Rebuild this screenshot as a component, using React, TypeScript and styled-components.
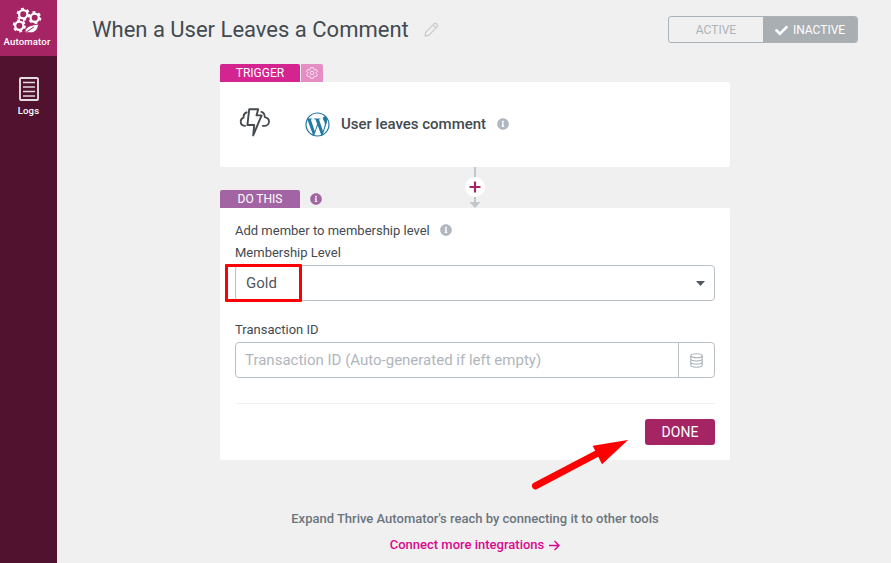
import React from "react";
import styled, { createGlobalStyle } from "styled-components";
import { FaCheck, FaInfoCircle, FaWordpressSimple } from "react-icons/fa";

const GlobalStyle = createGlobalStyle`
  * { box-sizing: border-box; }
  html, body { margin: 0; padding: 0; }
  body { background: #f0f0f0; font-family: Roboto, sans-serif; color: #434a50; overflow: hidden; }
  svg { display: block; flex: none; }
`;

const Shell = styled.div`
  display: flex;
  width: 891px;
  height: 563px;
  background: #f0f0f0;
`;

const Sidebar = styled.nav`
  flex: none;
  width: 57px;
  background: #50122f;
`;

const NavItem = styled.a<{ $brand?: boolean }>`
  display: flex;
  flex-direction: column;
  align-items: center;
  height: ${(p) => (p.$brand ? 56 : 68)}px;
  padding-top: ${(p) => (p.$brand ? 6 : 21)}px;
  background: ${(p) => (p.$brand ? "#a42464" : "transparent")};
  padding-right: ${(p) => (p.$brand ? 3 : 0)}px;
  color: #fff;
  font-size: 9.6px;
  font-weight: 500;
  line-height: 12px;
  gap: ${(p) => (p.$brand ? 2 : 4)}px;
  letter-spacing: 0.15px;
`;

const Main = styled.main`
  flex: 1;
  min-width: 0;
`;

const Header = styled.header`
  display: flex;
  align-items: center;
  height: 64px;
  padding: 0 33px 5px 35px;
`;

const Title = styled.h1`
  margin: 0 15px 0 0;
  font-size: 22px;
  font-weight: 400;
  line-height: 28px;
  white-space: nowrap;
`;

const Toggle = styled.div`
  display: flex;
  margin-left: auto;
  width: 190px;
  height: 27px;
  border: 1px solid #abb3ba;
  border-radius: 3px;
  overflow: hidden;
`;

const ToggleOption = styled.button<{ $on?: boolean }>`
  display: flex;
  align-items: center;
  justify-content: center;
  gap: 5px;
  width: 94px;
  padding: 1px 0 0;
  border: 0;
  font: 400 12px/25px Roboto, sans-serif;
  color: ${(p) => (p.$on ? "#fff" : "#abb3ba")};
  background: ${(p) => (p.$on ? "#a9aeb2" : "transparent")};
`;

const Flow = styled.div`
  width: 510px;
  margin-left: 163px;
`;

const StepHead = styled.div`
  display: flex;
  align-items: center;
  height: 18px;
`;

const StepTag = styled.span<{ $color: string }>`
  width: 80px;
  height: 18px;
  border-radius: 2px 2px 0 0;
  background: ${(p) => p.$color};
  color: #fff;
  font-size: 12px;
  line-height: 18px;
  text-align: center;
`;

const GearTag = styled.button`
  display: flex;
  align-items: center;
  justify-content: center;
  width: 22px;
  height: 18px;
  margin-left: 1px;
  padding: 0;
  border: 0;
  border-radius: 0 2px 0 0;
  background: #e48ec4;
`;

const TagHint = styled.span`
  margin-left: 10px;
  color: #a364a3;
`;

const TriggerCard = styled.section`
  display: flex;
  align-items: center;
  height: 85px;
  padding: 0 19px 2px;
  border-radius: 0 2px 2px 2px;
  background: #fff;
`;

const TriggerName = styled.span`
  margin: 0 11px 0 11px;
  font-size: 15px;
  font-weight: 500;
`;

const WordPressMark = styled(FaWordpressSimple)`
  margin: 1px 0 0 34px;
  color: #2578a0;
`;

const Hint = styled(FaInfoCircle)`
  color: #b0b7be;
`;

const Link = styled.div`
  position: relative;
  height: 23px;
`;

const Connector = styled.svg`
  position: absolute;
  left: 244px;
  top: 0;
`;

const ActionCard = styled.section`
  height: 252px;
  padding: 11px 15px 0;
  border-radius: 0 2px 2px 2px;
  background: #fff;
`;

const Label = styled.div`
  display: flex;
  align-items: center;
  gap: 10px;
  height: 22px;
  font-size: 13px;
`;

const Field = styled.div`
  position: relative;
  display: flex;
  align-items: center;
  width: 480px;
  height: 36px;
  margin-top: 2px;
  padding-left: 10px;
  border: 1px solid #b9c0c6;
  border-radius: 4px;
  font-size: 15px;
  color: #50575e;
`;

const SelectField = styled(Field)`
  justify-content: space-between;
  margin-bottom: 17px;
  padding-right: 9px;
`;

const Placeholder = styled.span`
  flex: 1;
  margin-left: -1px;
  color: #b0b6bc;
`;

const DataButton = styled.button`
  display: flex;
  align-items: center;
  justify-content: center;
  width: 36px;
  height: 34px;
  padding: 0;
  border: 0;
  border-left: 1px solid #b9c0c6;
  background: none;
`;

const Highlight = styled.div`
  position: absolute;
  left: -11px;
  top: -2px;
  width: 77px;
  height: 38px;
  border: 3px solid #fb0007;
  border-radius: 1px;
`;

const Actions = styled.div`
  display: flex;
  justify-content: flex-end;
  margin-top: 25px;
  padding-top: 15px;
  border-top: 1px solid #f1f1f1;
`;

const Done = styled.button`
  width: 70px;
  height: 26px;
  padding: 0;
  border: 0;
  border-radius: 3px;
  background: #a42464;
  color: #fff;
  font: 400 14px/26px Roboto, sans-serif;
`;

const Footer = styled.footer`
  display: flex;
  flex-direction: column;
  align-items: center;
  gap: 10px;
  padding-top: 51px;
  font-size: 13px;
  font-weight: 500;
  line-height: 16px;
  color: #6c757d;
  white-space: nowrap;
`;

const MoreLink = styled.a`
  display: flex;
  align-items: center;
  gap: 5px;
  color: #d9088c;
`;

const Pointer = styled.svg`
  position: absolute;
  left: 528px;
  top: 434px;
  pointer-events: none;
`;

const GEARS = [
  [11.2, 8.3],
  [22.7, 11.7],
  [7.3, 19.8],
];

const BrandLogo = () => (
  <svg width="30" height="28" viewBox="0 0 30 28" fill="none" stroke="#fff">
    {GEARS.map(([x, y]) => (
      <g key={x}>
        <circle cx={x} cy={y} r="4.1" strokeWidth="2.2" />
        <circle cx={x} cy={y} r="5.6" strokeWidth="2" strokeDasharray="2.9 2.965" />
      </g>
    ))}
    <path d="M13.5 27.3C11.8 22 17 19 26.5 18.2c-.3 6.2-5 9.8-10.3 8.2Z" fill="#fff" stroke="#a42464" strokeWidth=".8" />
    <path d="m12.3 27.5 9.5-6.5" stroke="#a42464" strokeWidth="1" />
  </svg>
);

const LogsIcon = () => (
  <svg width="22" height="24" viewBox="0 0 22 24" fill="none" stroke="#e4dce0">
    <rect x="2" y="1" width="18" height="22" rx="1" strokeWidth="1.9" />
    <path d="M5 5.5h12M5 10h12M5 14.5h12M5 19h12" strokeWidth="1.5" />
  </svg>
);

const Pencil = () => (
  <svg width="15" height="15" viewBox="0 0 15 15" fill="none" stroke="#c5c9cd" strokeWidth="1.1" strokeLinejoin="round">
    <path d="m1.1 13.9.5-3.6 8.7-8.7c.6-.6 1.3-.6 1.9 0l1.2 1.2c.6.6.6 1.3 0 1.9l-8.7 8.7-3.6.5ZM9 2.9 12.1 6" />
  </svg>
);

const GearIcon = () => (
  <svg width="12" height="12" viewBox="0 0 12 12" fill="none" stroke="#fbeaf5" strokeWidth=".9" strokeLinejoin="round">
    <path d="M4.8.6h2.4l.4 1.5 1 .6 1.5-.4 1.2 2.1-1.1 1.1v1l1.1 1.1-1.2 2.1-1.5-.4-1 .6-.4 1.5H4.8l-.4-1.5-1-.6-1.5.4L.7 7.6l1.1-1.1v-1L.7 4.4l1.2-2.1 1.5.4 1-.6Z" />
    <circle cx="6" cy="6" r="1.8" />
  </svg>
);

const StormIcon = () => (
  <svg width="32" height="34" viewBox="0 0 32 34" fill="none" stroke="#434a50" strokeWidth="1.8" strokeLinejoin="round" strokeLinecap="round">
    <path d="M7.6 5.3C5.3 6.2 4.3 8 4.6 10.6 2.9 11.2 1.7 12.6 1.7 14.5c0 2.5 1.7 4.3 4.4 4.3M22.4 4.9c2.3.8 3.4 2.8 3.3 5.2 2.6.5 4.3 2.1 4.3 4.3 0 2.5-2 4.4-4.8 4.4h-1.4" />
    <path d="M10.2 2.3h9l-1.7 6.1h5.1L14.2 28.4l1-10.4H8.4Z" strokeWidth="1.9" />
  </svg>
);

const DatabaseIcon = () => (
  <svg width="13" height="15" viewBox="0 0 13 15" fill="none" stroke="#a9b0b6" strokeWidth="1.1">
    <ellipse cx="6.5" cy="2.7" rx="5.7" ry="2" />
    <path d="M.8 2.7v9.4c0 1.2 2.5 2.2 5.7 2.2s5.7-1 5.7-2.2V2.7M.8 5.8C.8 7 3.3 8 6.5 8s5.7-1 5.7-2.2M.8 9c0 1.2 2.5 2.2 5.7 2.2S12.2 10.2 12.2 9" />
  </svg>
);

export default function App() {
  return (
    <>
      <GlobalStyle />
      <Shell>
        <Sidebar>
          <NavItem $brand>
            <BrandLogo />
            <span>Automator</span>
          </NavItem>
          <NavItem>
            <LogsIcon />
            <span>Logs</span>
          </NavItem>
        </Sidebar>
        <Main>
          <Header>
            <Title>When a User Leaves a Comment</Title>
            <Pencil />
            <Toggle>
              <ToggleOption>ACTIVE</ToggleOption>
              <ToggleOption $on>
                <FaCheck size={13} />
                INACTIVE
              </ToggleOption>
            </Toggle>
          </Header>
          <Flow>
            <StepHead>
              <StepTag $color="#d3248f">TRIGGER</StepTag>
              <GearTag aria-label="Trigger settings">
                <GearIcon />
              </GearTag>
            </StepHead>
            <TriggerCard>
              <StormIcon />
              <WordPressMark size={25} />
              <TriggerName>User leaves comment</TriggerName>
              <Hint size={12} />
            </TriggerCard>
            <Link>
              <Connector width="22" height="41" viewBox="0 0 22 41">
                <path d="M11 0v36" stroke="#c0c7cd" strokeWidth="2" />
                <path d="M5.5 35h11L11 41Z" fill="#c0c7cd" />
                <circle cx="11" cy="20" r="10" fill="#fff" />
                <path d="M11 14.5v11M5.5 20h11" stroke="#a42464" strokeWidth="2.2" />
              </Connector>
            </Link>
            <StepHead>
              <StepTag $color="#a364a3">DO THIS</StepTag>
              <TagHint>
                <FaInfoCircle size={12} />
              </TagHint>
            </StepHead>
            <ActionCard>
              <Label>
                Add member to membership level
                <Hint size={12} />
              </Label>
              <Label>Membership Level</Label>
              <SelectField>
                Gold
                <svg width="9" height="5" viewBox="0 0 9 5">
                  <path d="M0 0h9L4.5 5Z" fill="#50575e" />
                </svg>
                <Highlight />
              </SelectField>
              <Label>Transaction ID</Label>
              <Field>
                <Placeholder>Transaction ID (Auto-generated if left empty)</Placeholder>
                <DataButton aria-label="Dynamic data">
                  <DatabaseIcon />
                </DataButton>
              </Field>
              <Actions>
                <Done>DONE</Done>
              </Actions>
            </ActionCard>
            <Footer>
              <span>Expand Thrive Automator's reach by connecting it to other tools</span>
              <MoreLink>
                Connect more integrations
                <svg width="11" height="11" viewBox="0 0 11 11" fill="none" stroke="currentColor" strokeWidth="1.4">
                  <path d="M0 5.5h10M5.5 1 10 5.5 5.5 10" />
                </svg>
              </MoreLink>
            </Footer>
          </Flow>
        </Main>
        <Pointer width="102" height="58" viewBox="528 434 102 58">
          <path d="M535.5 485.8 600 452" stroke="#f00" strokeWidth="7" strokeLinecap="round" />
          <path d="m628 440-26 24.3-9.3-18.5Z" fill="#f00" />
        </Pointer>
      </Shell>
    </>
  );
}
